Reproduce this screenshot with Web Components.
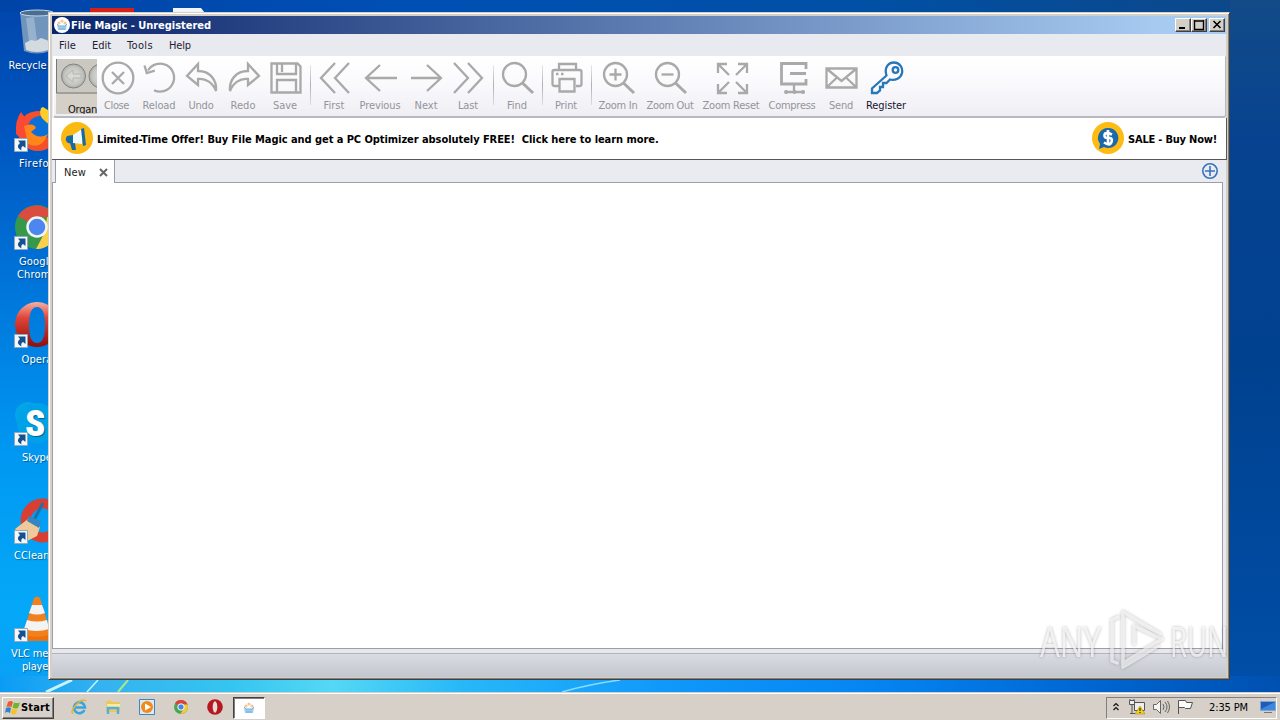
<!DOCTYPE html>
<html lang="en">
<head>
<meta charset="utf-8">
<title>File Magic</title>
<style>
  body {
    margin: 0;
    width: 1280px;
    height: 720px;
    overflow: hidden;
    font: 11px/13px "DejaVu Sans Condensed", "DejaVu Sans", sans-serif;
    font-stretch: condensed;
  }
</style>
</head>
<body>
<desk-top></desk-top>

<script>
const ICONS = {
  close: '<circle cx="17" cy="17" r="15.3"/><path d="M11 11l12 12M23 11L11 23"/>',
  reload: '<path d="M5 9.5A14 14 0 1 1 11 29.2M1.5 4.5l2.3 7.5 8-2.3"/>',
  undo: '<path d="M13 3L2 15l11 9v-6c8-1 15 4 18 12 1-11-6-20-18-20z"/>',
  redo: '<path d="M21 3l11 12-11 9v-6C13 17 6 22 3 30 2 19 9 10 21 10z"/>',
  save: '<path d="M2.500 2.500h26l3 3v26h-29zM8 3v10h19V3M8 31V19h19v12M13 3v8"/>',
  first: '<path d="M17 2L3 17l14 15M31 2L17 17l14 15"/>',
  prev: '<path d="M16 4L2 17l14 13M2 17h31"/>',
  next: '<path d="M17 4l14 13-14 13M1 17h30"/>',
  last: '<path d="M2 2l14 15L2 32M16 2l14 15-14 15"/>',
  find: '<circle cx="13.500" cy="13.500" r="11.500"/><path d="M21.500 22L32 32" stroke-width="3"/>',
  print: '<path d="M9 9V3h17v6M9 25H4.500q-2 0-2-2V11q0-2 2-2h25q2 0 2 2v12q0 2-2 2H26M9.500 18h15v12.500h-15zM6 13h2.500M11 13h2.500"/>',
  zin: '<circle cx="13.500" cy="13.500" r="11.500"/><path d="M7.500 13.500h12M13.500 7.500v12"/><path d="M21.500 22L32 32" stroke-width="3"/>',
  zout: '<circle cx="13.500" cy="13.500" r="11.500"/><path d="M7.500 13.500h12"/><path d="M21.500 22L32 32" stroke-width="3"/>',
  zreset: '<path d="M3 12V3h9M3 3l11 11M23 3h9v9M32 3L21 14M3 23v9h9M3 32l11-11M23 32h9v-9M32 32L21 21"/>',
  compress: '<path d="M30 8V2.500H5.500V23H30v-5M14 12.500h16" stroke-width="2.800"/><path d="M18 23v8M10 31h17"/><path d="M10 31h.1M18.500 31h.1M27 31h.1" stroke-width="4" stroke-linecap="round"/>',
  send: '<path d="M1.500 7.500h30v19h-30zM2 8l14.500 12L31 8M2 26l10-9.500M31 26l-10-9.500"/>',
  key: '<path d="M16.500 14.500C14 7 18 1.500 24 1.500S33 7 32 12 25 20 20 18.500L16.500 22H13v4H10v3.500L7 32H2v-4.500z"/><circle cx="25.500" cy="9" r="2.800"/>'
};

class ToolButton extends HTMLElement {
  constructor() {
    super();
    this.attachShadow({ mode: 'open' }).innerHTML = `
      <style>
        :host {
          display: flex;
          flex: none;
          flex-direction: column;
          align-items: center;
          padding-top: 4px;
          color: #94949b;
          stroke: #a9a9a9;
          box-sizing: border-box;
        }
        :host([active]) { color: #16162e; stroke: #2878b8; }
        svg { margin-left: 2px; width: 34px; height: 34px; fill: none; stroke-width: 2.3; }
        .label { margin-top: 4px; white-space: nowrap; }
      </style>
      <svg viewBox="0 0 34 34">${ICONS[this.getAttribute('icon')]}</svg>
      <div class="label"><slot></slot></div>
    `;
    this.style.width = this.getAttribute('width') + 'px';
  }
}

class DesktopIcon extends HTMLElement {
  constructor() {
    super();
    this.attachShadow({ mode: 'open' }).innerHTML = `
      <style>
        :host {
          display: block;
          position: relative;
          height: 98px;
          width: 74px;
          text-align: center;
          color: #fff;
          text-shadow: 1px 1px 1px #0006;
        }
        .pic { box-sizing: border-box; height: 52px; padding: 1px 0 0 13px; }
        .arrow { position: absolute; left: 14px; top: 33px; width: 14px; height: 14px; }
        :host([plain]) .arrow { display: none; }
      </style>
      <div class="pic"><slot name="pic"></slot></div>
      <svg class="arrow" viewBox="0 0 14 14">
        <path fill="#f4f8fb" stroke="#8fa9c0" d="M.5.5h13v13H.5z"/>
        <path fill="#15508f" d="M4 2.500h7.500V10L9 8Q6.500 9 7.500 12.500 1 9 6 5z"/>
      </svg>
      <slot></slot>
    `;
  }
}

class WindowButton extends HTMLElement {
  constructor() {
    super();
    this.attachShadow({ mode: 'open' }).innerHTML = `
      <style>
        :host {
          display: block;
          box-sizing: border-box;
          width: 16px;
          height: 14px;
          background: #d4d0c8;
          border: 1px solid;
          border-color: #fff #404040 #404040 #fff;
          box-shadow: inset -1px -1px #808080;
        }
        svg { display: block; width: 14px; height: 12px; fill: none; stroke: #000; }
      </style>
      <svg viewBox="0 0 14 12"><path d="${this.getAttribute('d')}" stroke-width="${this.getAttribute('sw') || 2}"/></svg>
    `;
  }
}

class ToolBar extends HTMLElement {
  constructor() {
    super();
    this.attachShadow({ mode: 'open' }).innerHTML = `
      <style>
        :host {
          display: flex;
          box-sizing: border-box;
          height: 62px;
          margin: 0 0 0 1px;
          border: 1px solid #b8b8bf;
          border-width: 0 1px 2px 1px;
          border-top: 1px solid #fff;
          border-left-color: #fff;
          border-radius: 0 0 3px 3px;
          background: linear-gradient(#fff, #f9f9fc 50%, #eeeef4);
        }
        .organ {
          box-sizing: border-box;
          flex: none;
          width: 41px;
          height: 55px;
          margin: 2px 0 0 2px;
          overflow: hidden;
          background: #d4d0c8;
          color: #111;
        }
        .organ svg { display: block; }
        .organ div { margin: 9px 0 0 12px; }
        .close { margin: 0 2px 0 0; }
        .sep {
          flex: none;
          width: 1px;
          height: 40px;
          margin: 8px 2px 0 4px;
          background: linear-gradient(#e8e8ec, #b0b0b8 50%, #dcdce2);
        }
      </style>
      <div class="organ">
        <svg width="41" height="35" viewBox="0 0 41 35">
          <defs><radialGradient id="g"><stop stop-color="#ddd"/><stop offset=".75" stop-color="#c4c4c0"/><stop offset="1" stop-color="#aaa"/></radialGradient></defs>
          <path d="M0 0h41v35H0z" fill="#cbc8c1"/>
          <path d="M.500 0v34H41" fill="none" stroke="#777"/>
          <g fill="url(#g)" stroke="#85857f"><circle cx="17.500" cy="17" r="12"/><circle cx="45" cy="17" r="12"/></g>
          <path d="M10 17l7-6v4h8v4h-8v4z" fill="#d8d8d5" stroke="#b4b4b0"/>
        </svg>
        <div><ui-text w="29">Organ</ui-text></div>
      </div>
      <tool-button class="close" icon="close" width="39"><ui-text w="25">Close</ui-text></tool-button>
      <tool-button icon="reload" width="42"><ui-text w="33">Reload</ui-text></tool-button>
      <tool-button icon="undo" width="42"><ui-text w="25">Undo</ui-text></tool-button>
      <tool-button icon="redo" width="42"><ui-text w="25">Redo</ui-text></tool-button>
      <tool-button icon="save" width="42"><ui-text w="24">Save</ui-text></tool-button>
      <div class="sep"></div>
      <tool-button icon="first" width="42"><ui-text w="21">First</ui-text></tool-button>
      <tool-button icon="prev" width="50"><ui-text w="41">Previous</ui-text></tool-button>
      <tool-button icon="next" width="42"><ui-text w="23">Next</ui-text></tool-button>
      <tool-button icon="last" width="42"><ui-text w="20">Last</ui-text></tool-button>
      <div class="sep"></div>
      <tool-button icon="find" width="42"><ui-text w="20">Find</ui-text></tool-button>
      <div class="sep"></div>
      <tool-button icon="print" width="42"><ui-text w="22">Print</ui-text></tool-button>
      <div class="sep"></div>
      <tool-button icon="zin" width="48"><ui-text w="39">Zoom In</ui-text></tool-button>
      <tool-button icon="zout" width="56"><ui-text w="47">Zoom Out</ui-text></tool-button>
      <tool-button icon="zreset" width="66"><ui-text w="57">Zoom Reset</ui-text></tool-button>
      <tool-button icon="compress" width="56"><ui-text w="47">Compress</ui-text></tool-button>
      <tool-button icon="send" width="42"><ui-text w="24">Send</ui-text></tool-button>
      <tool-button icon="key" width="48" active><ui-text w="40">Register</ui-text></tool-button>
    `;
  }
}

class OfferBanner extends HTMLElement {
  constructor() {
    super();
    this.attachShadow({ mode: 'open' }).innerHTML = `
      <style>
        :host {
          display: flex;
          align-items: center;
          box-sizing: border-box;
          height: 42px;
          margin-right: -1px;
          padding: 0 9px 1px 9px;
          background: #fff;
          border-right: 1px solid #555;
          border-bottom: 1px solid #555;
          color: #000;
          font-weight: bold;
        }
        svg { display: block; width: 32px; height: 32px; }
        .offer, .sale { margin: 2px 0 0 4px; }
        .right { margin-left: auto; }
      </style>
      <svg viewBox="0 0 32 32">
        <circle cx="16" cy="16" r="16" fill="#fcb813"/>
        <path fill="#1569a4" d="M6 14l6-1v9l-5-1q-4-3-1-7zM9 21h5l1 7h-4z"/>
        <path fill="#eefaff" d="M12 13l9-6v15l-9-1z"/>
        <path fill="#1569a4" d="M20 7l3-1 2 17-3 1z"/>
      </svg>
      <div class="offer"><ui-text w="561">Limited-Time Offer! Buy File Magic and get a PC Optimizer absolutely FREE!&nbsp; Click here to learn more.</ui-text></div>
      <svg class="right" viewBox="0 0 32 32">
        <circle cx="16" cy="16" r="16" fill="#fdbb13"/>
        <path fill="#1b69ad" d="M16 6a10 10 0 1 1-4 19l-5 2 1-5A10 10 0 0 1 16 6z"/>
        <path fill="none" stroke="#fff" stroke-width="2.600" d="M20 12.500q-7-3-7.500 0.500t4 3 3 4-7.500.500M16 8v15"/>
      </svg>
      <div class="sale"><ui-text w="89">SALE - Buy Now!</ui-text></div>
    `;
  }
}

class MagicWindow extends HTMLElement {
  constructor() {
    super();
    this.attachShadow({ mode: 'open' }).innerHTML = `
      <style>
        :host {
          display: flex;
          flex-direction: column;
          box-sizing: border-box;
          width: 1182px;
          height: 668px;
          padding: 2px;
          border: 1px solid;
          border-color: #d4d0c8 #404040 #404040 #d4d0c8;
          background: #d4d0c8;
          box-shadow: inset 1px 1px #fff, inset -1px -1px #808080;
        }
        .title {
          display: flex;
          align-items: center;
          height: 18px;
          margin: 1px 1px 0;
          padding: 0 1px 0 2px;
          background: linear-gradient(90deg, #0a246a, #a6caf0 94%);
          color: #fff;
          font-weight: bold;
        }
        .title svg { width: 16px; height: 16px; margin-right: 1px; }
        .buttons { display: flex; margin-left: auto; }
        .buttons :last-child { margin-left: 2px; }
        .menu { display: flex; gap: 16px; height: 22px; padding: 5px 7px 0; margin: 0 1px; box-sizing: border-box; background: #e9e9f0; color: #222230; }
        .main { display: flex; flex-direction: column; flex: 1; margin: 0 1px; background: #e9ebf0; }
        .tabs { display: flex; height: 23px; align-items: flex-start; }
        .tab {
          display: flex;
          align-items: center;
          box-sizing: border-box;
          width: 60px;
          height: 23px;
          margin-left: 3px;
          padding: 2px 6px 0 8px;
          background: #fff;
          border: 1px solid #9c9ca8;
          border-width: 0 1px;
          z-index: 1;
          color: #222;
        }
        .tab svg { margin-left: auto; }
        .plus { margin: 3px 8px 0 auto; }
        .page { box-sizing: border-box; height: 467px; margin: -1px 3px 0 0; border: 1px solid #9d9dae; background: #fff; }
        .gap { height: 4px; background: #e8e8ec; border-bottom: 1px solid #b3b3ba; }
        .status { flex: 1; background: linear-gradient(#dadce4, #c4c6ce); }
      </style>
      <div class="title">
        <svg viewBox="0 0 16 16"><circle cx="8" cy="8" r="8" fill="#fff"/><path d="M3 7.500l2 1.500h6l2-1.500-1 5.500H4z" fill="#9ccdee"/><path d="M3 7l2 2h6l2-2M5 12h6" fill="none" stroke="#6db0dd"/><g fill="#f6c592"><circle cx="5" cy="6" r="1.600"/><circle cx="8" cy="4" r="1.600"/><circle cx="11" cy="6" r="1.600"/></g></svg>
        <ui-text w="140">File Magic - Unregistered</ui-text>
        <div class="buttons">
          <window-button d="M3 9h6"></window-button>
          <window-button d="M2 2h10M2.500 1v9.500h9V1" sw="1.400"></window-button>
          <window-button d="M3.500 2l7 7M10.500 2l-7 7" sw="1.600"></window-button>
        </div>
      </div>
      <div class="menu">
        <ui-text w="17">File</ui-text><ui-text w="19">Edit</ui-text><ui-text w="26">Tools</ui-text><ui-text w="22">Help</ui-text>
      </div>
      <div class="main">
        <tool-bar></tool-bar>
        <offer-banner></offer-banner>
        <div class="tabs">
          <div class="tab"><ui-text w="22">New</ui-text>
            <svg width="9" height="9"><path d="M1 1l7 7M8 1L1 8" stroke="#666" stroke-width="2"/></svg>
          </div>
          <svg class="plus" width="16" height="16" fill="none" stroke="#3a72bd" stroke-width="1.600"><circle cx="8" cy="8" r="7.200"/><path d="M8 3v10M3 8h10"/></svg>
        </div>
        <div class="page"></div>
        <div class="gap"></div>
        <div class="status"></div>
      </div>
    `;
  }
}

class TaskBar extends HTMLElement {
  constructor() {
    super();
    this.attachShadow({ mode: 'open' }).innerHTML = `
      <style>
        :host {
          display: flex;
          box-sizing: border-box;
          height: 28px;
          padding-top: 3px;
          border-top: 1px solid #fff;
          box-shadow: 0 -1px #d4d0c8;
          background: #d6d0c8;
          color: #000;
        }
        .start {
          display: flex;
          align-items: center;
          box-sizing: border-box;
          width: 52px;
          height: 22px;
          margin-left: 2px;
          padding: 0 0 1px 2px;
          border: 1px solid;
          border-color: #fff #404040 #404040 #fff;
          box-shadow: inset -1px -1px #808080;
          font-weight: bold;
        }
        .start svg { width: 15px; height: 15px; margin-right: 1px; }
        .quick { display: flex; align-items: center; gap: 18px; height: 20px; margin-left: 17px; }
        .quick svg, .task svg { display: block; width: 16px; height: 16px; }
        .task {
          display: flex;
          align-items: center;
          justify-content: center;
          box-sizing: border-box;
          width: 32px;
          height: 22px;
          margin-left: 10px;
          background: #fff;
          border: 1px solid;
          border-color: #404040 #fff #fff #404040;
          box-shadow: inset 1px 1px #808080;
        }
        .tray {
          display: flex;
          align-items: center;
          box-sizing: border-box;
          width: 171px;
          height: 22px;
          margin: 0 3px 0 auto;
          padding: 0 0 2px 6px;
          border: 1px solid;
          border-color: #808080 #fff #fff #808080;
        }
        .tray svg { flex: none; }
      </style>
      <div class="start">
        <svg viewBox="0 0 15 15"><path fill="#ef5c2c" d="M3 2q3-2 5 0L6.500 7q-3-1-5 0z"/><path fill="#71b52c" d="M9 2.500q3 1 6 0L13 8q-3 1-5.500-.500z"/><path fill="#3084d3" d="M1 8q3-1.500 5 0L5 13q-3-2-5 0z"/><path fill="#f7c522" d="M7 8.500q3 1.500 5.500.500L11 14q-3 1-5-.500z"/></svg>
        <ui-text w="29">Start</ui-text>
      </div>
      <div class="quick">
        <svg viewBox="0 0 16 16" fill="none"><path d="M13.500 11a5.500 5.500 0 1 1 .500-2.500H4" stroke="#39a5df" stroke-width="2.600"/><path d="M2 14.500Q-1 13 5 6T15 2" stroke="#eab42a" stroke-width="1.500"/></svg>
        <svg viewBox="0 0 16 16"><path fill="#ecc75c" d="M1 3l4-2 2 2h8v10H1z"/><path fill="#fbeaa0" d="M2 5h13v3H2z"/><path d="M3 15V9h10v6" fill="none" stroke="#55aede" stroke-width="2.500"/></svg>
        <svg viewBox="0 0 16 16"><path fill="#dbeaf7" stroke="#3b86c4" d="M.500.500h15v15H.500z"/><circle cx="8" cy="8" r="6" fill="#f28a17"/><path fill="#fff" d="M6 4.500v7L12 8z"/></svg>
        <svg viewBox="0 0 16 16"><circle cx="8" cy="8" r="7" fill="#4aa74c"/><path fill="#dd4236" d="M8 8L2 4.300a7 7 0 0 1 12.500 1.200H8z"/><path fill="#f6ca35" d="M14.500 5.500a7 7 0 0 1-7 9.400L11 9 9 5.500z"/><circle cx="8" cy="8" r="3.200" fill="#4384ed" stroke="#fff"/></svg>
        <svg viewBox="0 0 16 16"><circle cx="8" cy="8" r="7.800" fill="#b51820"/><ellipse cx="8" cy="8" rx="2.300" ry="5.800" fill="#e8dcd8"/></svg>
      </div>
      <div class="task"><svg viewBox="0 0 16 16"><path d="M3 7.500l2 1.500h6l2-1.500-1 5.500H4z" fill="#9ccdee"/><path d="M3 7l2 2h6l2-2M5 12h6" fill="none" stroke="#6db0dd"/><g fill="#f6c592"><circle cx="5" cy="6" r="1.600"/><circle cx="8" cy="4" r="1.600"/><circle cx="11" cy="6" r="1.600"/></g></svg></div>
      <div class="tray">
        <svg width="6" height="10" fill="none" stroke="#111" stroke-width="1.200"><path d="M.500 4L3 1.500 5.500 4M.500 8L3 5.500 5.500 8"/></svg>
        <svg width="16" height="16" viewBox="0 0 16 16" style="margin-left:10px"><path fill="#eee" stroke="#555" d="M5.500 3.500h10v8h-10zM.500 1.500h5v4h-5zM3 6v9M1 1V0M5 1V0M1 14.500h5"/><path d="M11 7l5 8H6z" fill="#f4d21c" stroke="#9c7c00" stroke-width=".5"/><path d="M11 9v3m0 1v1" stroke="#000"/></svg>
        <svg width="17" height="16" viewBox="0 0 17 16" fill="#f5f5f5" stroke="#666" style="margin-left:8px"><path d="M.500 5.500h3l4-4v13l-4-4h-3z"/><path fill="none" d="M10 5q2 3 0 6M12 3q4 5 0 10M14.500 2q4 6 0 12"/></svg>
        <svg width="16" height="16" viewBox="0 0 16 16" fill="#fafafa" stroke="#555" style="margin-left:7px"><path d="M1.500 15V1.500h7l1 2h6l-2 6h-5l-1-1h-6"/></svg>
        <ui-text w="39" style="margin-left:16px">2:35 PM</ui-text>
        <svg width="16" height="14" viewBox="0 0 16 14" style="margin-left:12px"><path d="M.500 1.500h15v9H.500z" fill="#1e5cba" stroke="#7aa7d8"/><path d="M1 9l14-7v8H1z" fill="#3d87dd"/><path d="M4 12.500h8" stroke="#777"/></svg>
      </div>
    `;
  }
}

class RunMark extends HTMLElement {
  constructor() {
    super();
    this.attachShadow({ mode: 'open' }).innerHTML = `
      <style>
        :host { display: block; width: 192px; height: 66px; }
        svg { display: block; overflow: visible; filter: drop-shadow(0 0 1.500px #0006); }
        text { font: 42px "Open Sans", sans-serif; }
      </style>
      <svg width="192" height="66" fill="none" stroke="#fff" stroke-linejoin="round" stroke-linecap="round">
        <text x="2" y="51" textLength="61" lengthAdjust="spacingAndGlyphs" fill="#fff" fill-opacity=".7" stroke="none">ANY</text>
        <path d="M120 40L85 61V6l37 22M96 38V20l28 13-37 23M80 11l-6 3v41l5 2" stroke-width="3.500" stroke-opacity=".65"/>
        <text x="132" y="51" textLength="58" lengthAdjust="spacingAndGlyphs" fill="#fff" fill-opacity=".7" stroke="none">RUN</text>
      </svg>
    `;
  }
}

class DeskTop extends HTMLElement {
  constructor() {
    super();
    this.attachShadow({ mode: 'open' }).innerHTML = `
      <style>
        :host {
          display: flex;
          flex-direction: column;
          position: relative;
          height: 720px;
          background:
            linear-gradient(90deg, #0a9cf5, #35b2f0 8%, #35c5f0 18%, #55d8f5 26%, #28b8f8 36%, #1098fa 52%, #0585f2 68%, #0068d4 84%, #0050b0) 0 676px / 100% 20px no-repeat,
            linear-gradient(90deg, #0044a8, #0050b4 35%, #0050a5 70%, #0c488a) 0 0 / 1230px 12px no-repeat,
            linear-gradient(#134b88, #064290 20%, #00418f 50%, #0050aa) 1230px 0 / 50px 100% no-repeat,
            linear-gradient(#0045ac, #0058c2 20%, #0078dc 42%, #0098f2 63%, #05a8f8 85%, #0a9cf5);
        }
        .icons { flex: 1; padding-top: 7px; }
        .streaks { position: absolute; left: 0; top: 680px; }
        .behind { position: absolute; left: 90px; top: 8px; }
        magic-window { position: absolute; left: 48px; top: 12px; }
        run-mark { position: absolute; left: 1038px; top: 606px; }
        .icons svg { display: block; width: 48px; height: 48px; overflow: visible; }
      </style>
      <svg class="behind" width="120" height="5"><path d="M0 0h44v5H0z" fill="#d81f18"/><path d="M83 0h28l4 5H83z" fill="#f2f6fa"/></svg>
      <svg class="streaks" width="1280" height="12" fill="none" stroke="#c8f3ff"><path d="M46 12L72 0" stroke-width="3"/><path d="M87 12L98 0" stroke-width="1.500"/><path d="M118 12L128 0" stroke="#a9e88a" stroke-width="2"/><path d="M562 12Q590 4 620 0" stroke="#8adcff" stroke-width="1.500"/></svg>
      <div class="icons">
        <desktop-icon plain><svg slot="pic" viewBox="0 0 48 48"><path fill="#8da8bf" fill-opacity=".8" d="M7 4l4 39q13 5 26 0l4-39z"/><path fill="#c3d4e1" fill-opacity=".45" d="M13 10l4 31h8L21 9z"/><ellipse cx="24" cy="5" rx="17" ry="3" fill="#4a6d92" stroke="#c8d6e2"/><path d="M12 35l6-3 5 1 5-3 8 3-1 9q-11 4-22 0z" fill="#d4dbe0"/></svg><ui-text w="57">Recycle Bin</ui-text></desktop-icon>
        <desktop-icon><svg slot="pic" viewBox="0 0 48 48"><circle cx="25" cy="25" r="20" fill="#f4502c"/><path fill="#fb4935" d="M3 28Q2 14 8 6l5 7q7-3 12-1L14 38z"/><circle cx="27" cy="22" r="12" fill="#0a70d8"/><path fill="#ffce28" d="M28 2q-3 8 4 13t8 14l6-8Q44 8 30 1z"/><path fill="#ff8618" d="M11 20q10-4 12 2l-5 4q8 8 17 2-6 16-20 10z"/></svg><ui-text w="36">Firefox</ui-text></desktop-icon>
        <desktop-icon><svg slot="pic" viewBox="0 0 48 48"><g transform="translate(0 1)"><circle cx="24" cy="22" r="22" fill="#35984b"/><path fill="#d94c3f" d="M24 22L5 11a22 22 0 0 1 38 1H24z"/><path fill="#fbd04b" d="M43 12a22 22 0 0 1-20 32l9-17 2-15z"/><circle cx="24" cy="22" r="9.500" fill="#4b87ef" stroke="#f0f5f5" stroke-width="2.500"/></g></svg><ui-text w="36">Google</ui-text><br><ui-text w="40">Chrome</ui-text></desktop-icon>
        <desktop-icon><svg slot="pic" viewBox="0 0 48 48"><defs><linearGradient id="o" x2="0" y2="1"><stop stop-color="#f5b0a4"/><stop offset=".35" stop-color="#df4537"/><stop offset="1" stop-color="#8e0d0b"/></linearGradient></defs><path fill="url(#o)" fill-rule="evenodd" d="M24 0a22 22.500 0 1 0 .1 0zM24 5q8 0 8 18t-8 18-8-18 8-18z"/></svg><ui-text w="31">Opera</ui-text></desktop-icon>
        <desktop-icon><svg slot="pic" viewBox="0 0 48 48"><circle cx="15" cy="15" r="13" fill="#00a6e8"/><circle cx="24" cy="23" r="20" fill="#00a2e7"/><text x="12" y="36" fill="#fff" font-family="Roboto, sans-serif" font-size="37" font-weight="900">S</text></svg><ui-text w="30">Skype</ui-text></desktop-icon>
        <desktop-icon><svg slot="pic" viewBox="0 0 48 48"><path d="M40 9a17 17 0 1 0 0 27" fill="none" stroke="#d83f32" stroke-width="10"/><path fill="#f0c99b" d="M2 31l13-10 12 8-3 9-12 6z"/><path d="M30 5L21 22" stroke="#1872b0" stroke-width="3"/><path fill="#3387be" d="M16 18l12 5-2 7-12-7z"/></svg><ui-text w="46">CCleaner</ui-text></desktop-icon>
        <desktop-icon><svg slot="pic" viewBox="0 0 48 48"><path d="M10 33h28l6 12H4z" fill="#ec7010"/><path d="M21 2q3-3 6 0l11 36q-14 6-28 0z" fill="#f2811d"/><path d="M19 9h10l3 8q-8 3-16 0zM14 24q10 3 20 0l2 9q-12 4-25 0z" fill="#f3f3f3"/></svg><ui-text w="52">VLC media</ui-text><br><ui-text w="30">player</ui-text></desktop-icon>
      </div>
      <magic-window></magic-window>
      <run-mark></run-mark>
      <task-bar></task-bar>
    `;
  }
}

// single line of text spaced out to the width given in w
class UiText extends HTMLElement {
  constructor() {
    super();
    this.attachShadow({ mode: 'open' }).innerHTML = `
      <style>
        :host { display: inline-block; white-space: nowrap; }
      </style>
      <slot></slot>
    `;
  }

  connectedCallback() {
    this.style.width = 'auto';
    const real = this.getBoundingClientRect().width;
    const want = Number(this.getAttribute('w'));
    this.style.letterSpacing = (want - real) / this.textContent.length + 'px';
    this.style.width = want + 'px';
  }
}

window.customElements.define('desk-top', DeskTop);
window.customElements.define('magic-window', MagicWindow);
window.customElements.define('tool-bar', ToolBar);
window.customElements.define('tool-button', ToolButton);
window.customElements.define('offer-banner', OfferBanner);
window.customElements.define('window-button', WindowButton);
window.customElements.define('desktop-icon', DesktopIcon);
window.customElements.define('task-bar', TaskBar);
window.customElements.define('run-mark', RunMark);
window.customElements.define('ui-text', UiText);
</script>
</body>
</html>
